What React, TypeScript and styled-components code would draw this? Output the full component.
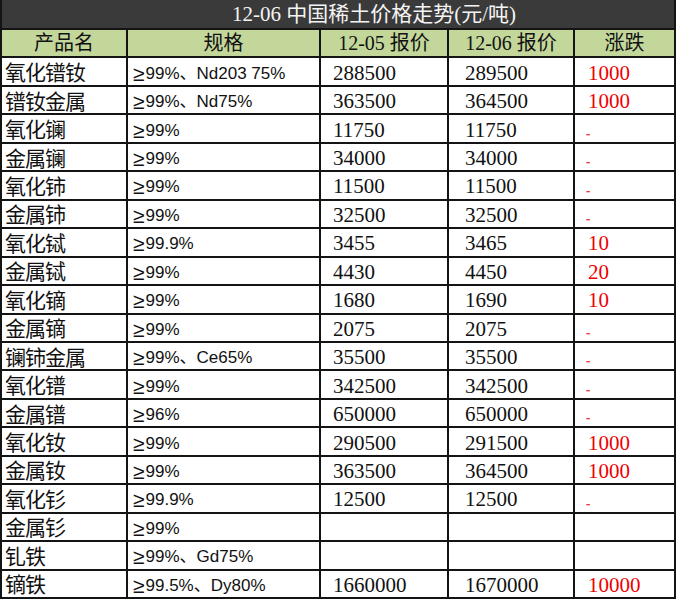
import styled, { createGlobalStyle } from 'styled-components';

type Row = [string, string, string, string, string];

const rows: Row[] = [
  ['氧化镨钕', '99%、Nd203 75%', '288500', '289500', '1000'],
  ['镨钕金属', '99%、Nd75%', '363500', '364500', '1000'],
  ['氧化镧', '99%', '11750', '11750', '-'],
  ['金属镧', '99%', '34000', '34000', '-'],
  ['氧化铈', '99%', '11500', '11500', '-'],
  ['金属铈', '99%', '32500', '32500', '-'],
  ['氧化铽', '99.9%', '3455', '3465', '10'],
  ['金属铽', '99%', '4430', '4450', '20'],
  ['氧化镝', '99%', '1680', '1690', '10'],
  ['金属镝', '99%', '2075', '2075', '-'],
  ['镧铈金属', '99%、Ce65%', '35500', '35500', '-'],
  ['氧化镨', '99%', '342500', '342500', '-'],
  ['金属镨', '96%', '650000', '650000', '-'],
  ['氧化钕', '99%', '290500', '291500', '1000'],
  ['金属钕', '99%', '363500', '364500', '1000'],
  ['氧化钐', '99.9%', '12500', '12500', '-'],
  ['金属钐', '99%', '', '', ''],
  ['钆铁', '99%、Gd75%', '', '', ''],
  ['镝铁', '99.5%、Dy80%', '1660000', '1670000', '10000'],
];

export default function App() {
  return (
    <>
      <GlobalStyle />
      <Sheet>
        <Title>12-06 中国稀土价格走势(元/吨)</Title>

        <HeaderCell>产品名</HeaderCell>
        <HeaderCell>规格</HeaderCell>
        <HeaderCell>12-05 报价</HeaderCell>
        <HeaderCell>12-06 报价</HeaderCell>
        <HeaderCell>涨跌</HeaderCell>

        {rows.map(([name, spec, prev, curr, change]) => (
          <Line key={name}>
            <NameCell>{name}</NameCell>
            <SpecCell>
              <Geq>≥</Geq>
              {spec}
            </SpecCell>
            <PriceCell $pad={12}>{prev}</PriceCell>
            <PriceCell $pad={16}>{curr}</PriceCell>
            <ChangeCell>
              {change === '-' ? <Dash>-</Dash> : change}
            </ChangeCell>
          </Line>
        ))}
      </Sheet>
    </>
  );
}

const GlobalStyle = createGlobalStyle`
  html, body {
    margin: 0;
    padding: 0;
    background: #ffffff;
  }
`;

const Sheet = styled('div')`
  width: 676px;
  height: 599px;
  box-sizing: border-box;
  display: grid;
  grid-template-columns: 124px 191px 126px 124px 99px;
  grid-template-rows: 28px repeat(20, 1fr);
  gap: 2px;
  padding: 0 2px 2px;
  background: #141414;
`;

const Title = styled('div')`
  grid-column: 1 / -1;
  display: flex;
  align-items: center;
  justify-content: center;
  padding-left: 72px;
  background: #3a3a3a;
  color: #f4f4f4;
  font-family: 'Liberation Serif', 'Noto Sans CJK SC', serif;
  font-size: 21px;
  line-height: 1;
  white-space: nowrap;
`;

const HeaderCell = styled('div')`
  display: flex;
  align-items: center;
  justify-content: center;
  background: #c4d79b;
  color: #111;
  font-family: 'Liberation Serif', 'Noto Sans CJK SC', serif;
  font-size: 20px;
  line-height: 1;
  white-space: nowrap;
`;

const Line = styled('div')`
  display: contents;
`;

const Cell = styled('div')`
  display: flex;
  align-items: center;
  background: #ffffff;
  color: #111;
  line-height: 1;
  white-space: nowrap;
`;

const NameCell = styled(Cell)`
  padding-left: 3px;
  font-family: 'Noto Sans CJK SC', sans-serif;
  font-size: 21px;
  letter-spacing: -1px;
`;

const SpecCell = styled(Cell)`
  padding: 3px 0 0 5px;
  font-family: 'Liberation Sans', 'Noto Sans CJK SC', sans-serif;
  font-size: 17px;
`;

const Geq = styled('span')`
  margin-right: 1px;
  font-size: 21px;
  font-weight: 300;
`;

const PriceCell = styled(Cell)<{ $pad: number }>`
  padding: 3px 0 0 ${(p) => p.$pad}px;
  font-family: 'Liberation Serif', serif;
  font-size: 21px;
`;

const ChangeCell = styled(Cell)`
  padding: 3px 0 0 13px;
  color: #f00000;
  font-family: 'Liberation Serif', serif;
  font-size: 21px;
`;

const Dash = styled('span')`
  align-self: flex-end;
  margin: 0 0 2px -2px;
  font-family: 'Liberation Sans', sans-serif;
  font-size: 13px;
  line-height: 13px;
  color: #f03030;
  -webkit-text-stroke: 0.3px #f03030;
`;
